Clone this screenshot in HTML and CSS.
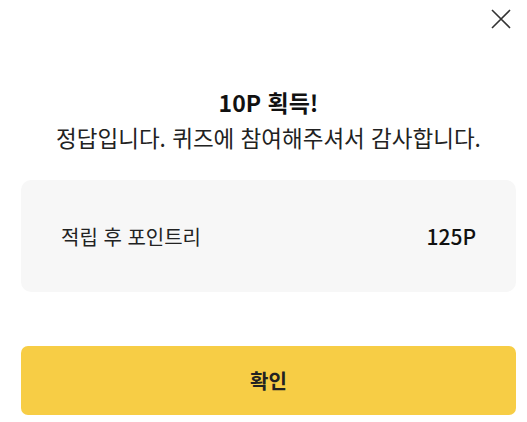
FILE: index.html
```html
<!DOCTYPE html>
<html lang="ko">
<head>
<meta charset="utf-8">
<link rel="stylesheet" href="styles.css">
</head>
<body>
<div class="dialog">
  <div class="top">
    <button class="close" aria-label="닫기">
      <svg width="20" height="20" viewBox="0 0 20 20"><path d="M1 1L19 19M19 1L1 19" stroke="#333" stroke-width="1.6" fill="none"/></svg>
    </button>
  </div>
  <div class="head">
    <h1 class="title">10P 획득!</h1>
    <p class="sub">정답입니다. 퀴즈에 참여해주셔서 감사합니다.</p>
  </div>
  <div class="card">
    <span class="label">적립 후 포인트리</span>
    <span class="value">125P</span>
  </div>
  <button class="confirm">확인</button>
</div>
</body>
</html>
```
FILE: styles.css
```css
html, body { margin: 0; padding: 0; background: #fff; }
body {
  font-family: "Noto Sans CJK KR", "Noto Sans", sans-serif;
  color: #222;
  width: 527px;
  height: 422px;
  overflow: hidden;
}
.dialog {
  padding: 0 11px 0 21px;
  display: flex;
  flex-direction: column;
}
.top {
  display: flex;
  justify-content: flex-end;
  padding-top: 9px;
  height: 44px;
  box-sizing: border-box;
}
.close {
  border: 0;
  background: none;
  padding: 0;
  margin-right: 5px;
  width: 20px;
  height: 20px;
}
.close svg { display: block; }
.head { text-align: center; margin-top: 42px; }
.title {
  margin: 0;
  font-size: 23px;
  font-weight: 700;
  line-height: 32px;
  color: #111;
}
.sub {
  margin: 2px 0 0;
  font-size: 22.5px;
  line-height: 34px;
  color: #222;
}
.card {
  margin-top: 26px;
  height: 112px;
  background: #f7f7f7;
  border-radius: 10px;
  display: flex;
  align-items: center;
  justify-content: space-between;
  padding: 0 40px;
  box-sizing: border-box;
}
.label { font-size: 20px; color: #222; }
.value { font-size: 21px; font-weight: 500; color: #111; }
.confirm {
  margin-top: 54px;
  height: 69px;
  border: 0;
  border-radius: 7px;
  background: #f7cd45;
  font-family: inherit;
  font-size: 20px;
  font-weight: 700;
  color: #222;
}
```
